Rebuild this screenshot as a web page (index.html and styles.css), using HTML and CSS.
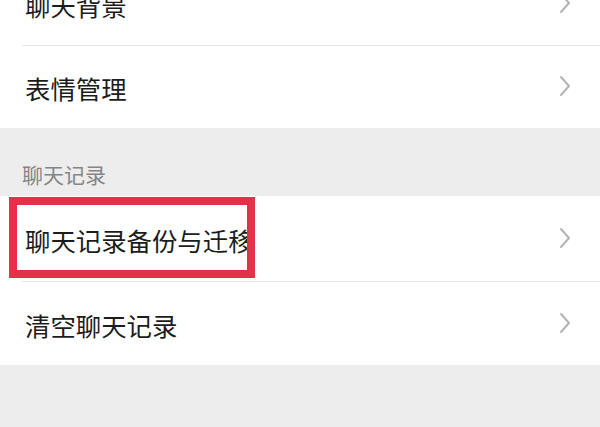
FILE: index.html
```html
<!DOCTYPE html>
<html lang="zh-CN">
<head>
<meta charset="utf-8">
<link rel="stylesheet" href="styles.css">
</head>
<body>
<div class="page">
  <div class="group group-top">
    <div class="row row-first">
      <span class="label">聊天背景</span>
      <svg class="chev" viewBox="0 0 12 22" width="12" height="22"><polyline points="2,2 10,11 2,20"/></svg>
    </div>
    <div class="row row-second">
      <span class="label">表情管理</span>
      <svg class="chev" viewBox="0 0 12 22" width="12" height="22"><polyline points="2,2 10,11 2,20"/></svg>
    </div>
  </div>
  <div class="section-header">聊天记录</div>
  <div class="group">
    <div class="row row-third">
      <span class="label">聊天记录备份与迁移</span>
      <svg class="chev" viewBox="0 0 12 22" width="12" height="22"><polyline points="2,2 10,11 2,20"/></svg>
      <div class="highlight"></div>
    </div>
    <div class="row row-fourth">
      <span class="label">清空聊天记录</span>
      <svg class="chev" viewBox="0 0 12 22" width="12" height="22"><polyline points="2,2 10,11 2,20"/></svg>
    </div>
  </div>
</div>
</body>
</html>
```

FILE: styles.css
```css
html, body {
  margin: 0;
  padding: 0;
  background: #ededed;
}
body {
  width: 600px;
  height: 427px;
  overflow: hidden;
  font-family: "Noto Sans CJK SC", "Noto Sans", sans-serif;
}
.page {
  display: flex;
  flex-direction: column;
}
.group {
  background: #ffffff;
  display: flex;
  flex-direction: column;
}
.group-top {
  margin-top: -38px;
}
.row {
  position: relative;
  display: flex;
  align-items: center;
  justify-content: space-between;
  padding: 3px 29px 0 25px;
  box-sizing: border-box;
}
.row + .row::before {
  content: "";
  position: absolute;
  top: 0;
  left: 22px;
  right: 0;
  height: 1px;
  background: #e5e5e5;
}
.row-first { height: 83px; }
.row-second { height: 83px; }
.row-third { height: 85px; }
.row-fourth { height: 84px; }
.label {
  font-size: 25.4px;
  line-height: 30px;
  color: #1c1c1c;
  white-space: nowrap;
}
.chev {
  fill: none;
  stroke: #b3b3b3;
  stroke-width: 2;
  stroke-linecap: round;
  stroke-linejoin: round;
  margin-top: -4px;
}
.section-header {
  height: 68px;
  box-sizing: border-box;
  padding: 0 0 8px 22px;
  display: flex;
  align-items: flex-end;
  font-size: 21px;
  line-height: 28px;
  color: #858585;
}
.highlight {
  position: absolute;
  left: 9px;
  top: 1px;
  width: 246px;
  height: 81px;
  box-sizing: border-box;
  border: 8px solid #e6304a;
}
```
